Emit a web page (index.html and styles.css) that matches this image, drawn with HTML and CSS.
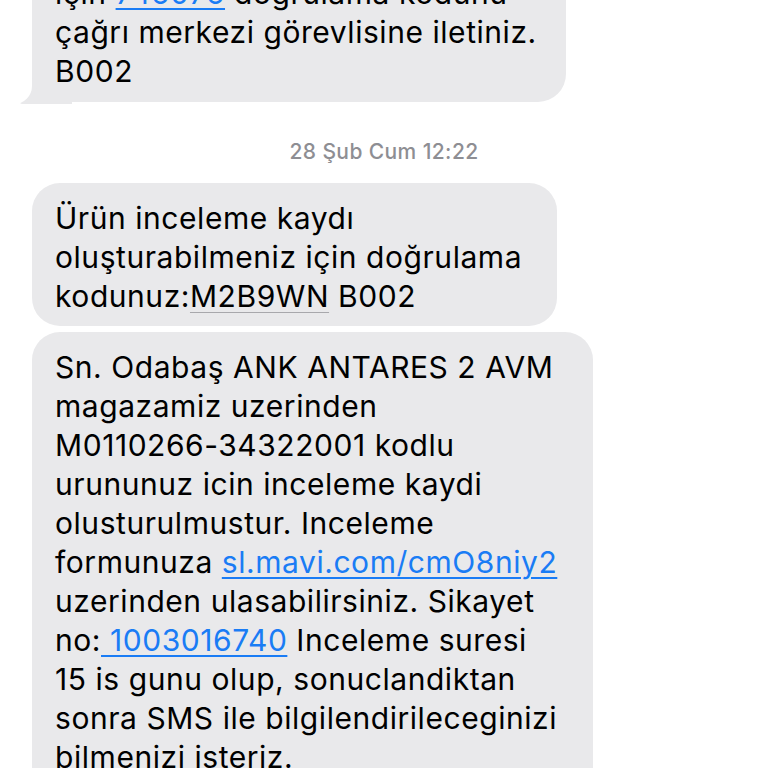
FILE: index.html
```html
<!DOCTYPE html>
<html lang="tr">
<head>
<meta charset="utf-8">
<link rel="stylesheet" href="styles.css">
</head>
<body>
<div class="thread">
  <div class="bubble b1 tail">için <span class="link">745075</span> doğrulama kodunu<br>çağrı merkezi görevlisine iletiniz.<br>B002</div>
  <div class="stamp">28 Şub Cum 12:22</div>
  <div class="bubble b2">Ürün inceleme kaydı<br>oluşturabilmeniz için doğrulama<br>kodunuz:<span class="code">M2B9WN</span> B002</div>
  <div class="bubble b3">Sn. Odabaş ANK ANTARES 2 AVM<br>magazamiz uzerinden<br>M0110266-34322001 kodlu<br>urununuz icin inceleme kaydi<br>olusturulmustur. Inceleme<br>formunuza <span class="link">sl.mavi.com/cmO8niy2</span><br>uzerinden ulasabilirsiniz. Sikayet<br>no:<span class="link"> 1003016740</span> Inceleme suresi<br>15 is gunu olup, sonuclandiktan<br>sonra SMS ile bilgilendirileceginizi<br>bilmenizi isteriz.</div>
</div>
</body>
</html>
```
FILE: styles.css
```css
html {
  background: #ffffff;
}
html, body {
  margin: 0;
  padding: 0;
  overflow: hidden;
}
.thread {
  display: flex;
  flex-direction: column;
  align-items: flex-start;
  padding-left: 32px;
  font-family: Inter, "Liberation Sans", sans-serif;
}
.bubble {
  position: relative;
  box-sizing: border-box;
  background: #e9e9eb;
  color: #000000;
  border-radius: 28px;
  padding: 16px 0 10px 23px;
  font-size: 30px;
  line-height: 39px;
  letter-spacing: 0.55px;
  white-space: nowrap;
}
.b1 {
  width: 534px;
  margin-top: -42px;
  padding-bottom: 11px;
}
.b2 {
  width: 525px;
}
.b3 {
  width: 561px;
  margin-top: 6px;
  padding-bottom: 60px;
}
.tail::before {
  content: "";
  position: absolute;
  bottom: -2px;
  left: -12px;
  width: 52px;
  height: 32px;
  background: #e9e9eb;
  border-bottom-left-radius: 2px;
  z-index: -1;
}
.tail::after {
  content: "";
  position: absolute;
  bottom: -2px;
  left: -44px;
  width: 44px;
  height: 34px;
  background: #ffffff;
  border-bottom-right-radius: 18px;
  z-index: -1;
}
.stamp {
  align-self: stretch;
  margin: 38px 0 19px -32px;
  text-align: center;
  font-size: 21px;
  line-height: 24px;
  font-weight: 500;
  letter-spacing: 0.4px;
  color: #8e8e93;
}
.link {
  color: #1a7cf5;
  text-decoration: underline;
  text-decoration-thickness: 2px;
  text-underline-offset: 4px;
}
.code {
  text-decoration: underline;
  text-decoration-color: #a8a8ac;
  text-decoration-thickness: 1px;
  text-underline-offset: 5px;
}
```
